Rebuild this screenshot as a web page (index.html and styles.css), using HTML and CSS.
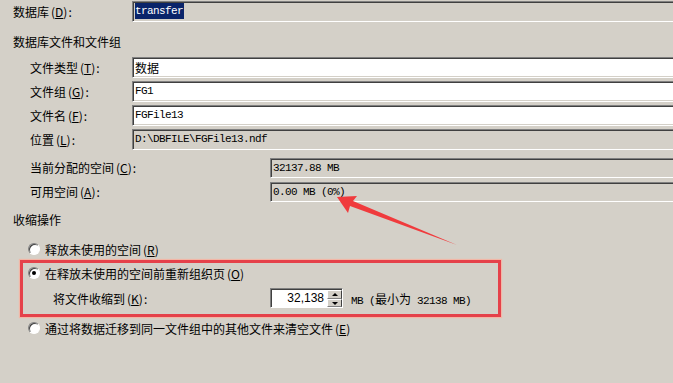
FILE: index.html
```html
<!DOCTYPE html>
<html>
  <head>
    <title>收缩文件</title>
    <link rel="stylesheet" href="styles.css">
  </head>
  <body>
    <div class="dialog">
      <div class="row top-row">
        <div class="label">数据库<span class="key">(<u>D</u>)</span>:</div>
        <div class="box gray"><span class="selected">transfer</span></div>
      </div>

      <div class="heading files-heading">数据库文件和文件组</div>

      <div class="group">
        <div class="row">
          <div class="label">文件类型<span class="key">(<u>T</u>)</span>:</div>
          <div class="box"><span class="cjk">数据</span></div>
        </div>
        <div class="row">
          <div class="label">文件组<span class="key">(<u>G</u>)</span>:</div>
          <div class="box">FG1</div>
        </div>
        <div class="row">
          <div class="label">文件名<span class="key">(<u>F</u>)</span>:</div>
          <div class="box">FGFile13</div>
        </div>
        <div class="row">
          <div class="label">位置<span class="key">(<u>L</u>)</span>:</div>
          <div class="box gray">D:\DBFILE\FGFile13.ndf</div>
        </div>

        <div class="row space-row first-space">
          <div class="label wide">当前分配的空间<span class="key">(<u>C</u>)</span>:</div>
          <div class="box gray">32137.88 MB</div>
        </div>
        <div class="row space-row">
          <div class="label wide">可用空间<span class="key">(<u>A</u>)</span>:</div>
          <div class="box gray">0.00 MB (0%)</div>
        </div>
      </div>

      <div class="heading shrink-heading">收缩操作</div>

      <div class="option first-option">
        <span class="radio"></span>
        <span>释放未使用的空间<span class="key">(<u>R</u>)</span></span>
      </div>

      <div class="highlight">
        <div class="option">
          <span class="radio checked"></span>
          <span>在释放未使用的空间前重新组织页<span class="key">(<u>O</u>)</span></span>
        </div>
        <div class="shrink-row">
          <div class="label shrink-label">将文件收缩到<span class="key">(<u>K</u>)</span>:</div>
          <div class="spinner">
            <div class="spin-value">32,138</div>
            <div class="spin-buttons">
              <span class="spin-btn up"></span>
              <span class="spin-btn down"></span>
            </div>
          </div>
          <div class="unit">MB (<span class="cjk">最小为</span> 32138 MB)</div>
        </div>
      </div>

      <div class="option last-option">
        <span class="radio"></span>
        <span>通过将数据迁移到同一文件组中的其他文件来清空文件<span class="key">(<u>E</u>)</span></span>
      </div>
    </div>

    <!-- red annotation arrow drawn over the dialog -->
    <svg class="arrow" width="673" height="383" viewBox="0 0 673 383">
      <polygon points="337,197 357,196 353,201 457,245 350,206 348,213" fill="#f03b3d"/>
    </svg>
  </body>
</html>
```

FILE: styles.css
```css
body {
  margin: 0;
  width: 673px;
  height: 383px;
  overflow: hidden;
  position: relative;
  background-color: #d4d0c8;
  font-family: "Noto Sans CJK SC", "Liberation Sans", sans-serif;
  font-size: 12px;
  color: #000;
}

u {
  text-decoration: underline;
  text-underline-offset: 1px;
}

.key {
  margin-left: 2px;
  margin-right: 1px;
}

.dialog {
  display: flex;
  flex-direction: column;
  padding-top: 1px;
}

.row {
  display: flex;
  align-items: center;
  height: 21px;
}

.top-row {
  padding-left: 13px;
}

.label {
  width: 102px;
  flex-shrink: 0;
  line-height: 21px;
}

.top-row .label {
  width: 119px;
}

.label.wide {
  width: 240px;
}

.box {
  flex: 1;
  height: 21px;
  box-sizing: border-box;
  margin-right: -4px;
  padding-left: 2px;
  background-color: #fff;
  border: 1px solid;
  border-color: #808080 #fff #fff #808080;
  box-shadow: inset 1px 1px #404040, inset -1px -1px #d4d0c8;
  font-family: "Liberation Mono", monospace;
  font-size: 11px;
  letter-spacing: -0.6px;
  line-height: 19px;
  white-space: nowrap;
}

.box.gray {
  background-color: #d4d0c8;
}

.cjk {
  font-family: "Noto Sans CJK SC", sans-serif;
  font-size: 12px;
  letter-spacing: 0;
}

.selected {
  background-color: #0a246a;
  color: #fff;
  padding: 2px 1px 2px 0;
}

.heading {
  height: 20px;
  line-height: 20px;
  padding-left: 13px;
}

.files-heading {
  margin-top: 10px;
}

.group {
  display: flex;
  flex-direction: column;
  gap: 3px;
  margin-top: 5px;
  padding-left: 30px;
}

.space-row .box {
  height: 20px;
}

.first-space {
  margin-top: 4px;
}

.shrink-heading {
  margin-top: 8px;
}

.option {
  display: flex;
  align-items: center;
  gap: 5px;
  height: 20px;
}

.first-option {
  margin-top: 9px;
  padding-left: 28px;
}

.last-option {
  margin-top: 1px;
  padding-left: 28px;
}

.radio {
  width: 12px;
  height: 12px;
  box-sizing: border-box;
  border-radius: 50%;
  background-color: #fff;
  border: 1px solid;
  border-color: #808080 #fff #fff #808080;
  box-shadow: inset 1px 1px #404040;
  position: relative;
}

.radio.checked::after {
  content: "";
  position: absolute;
  left: 3px;
  top: 3px;
  width: 4px;
  height: 4px;
  border-radius: 50%;
  background-color: #000;
}

.highlight {
  width: 481px;
  box-sizing: border-box;
  margin-top: 1px;
  margin-left: 20px;
  padding: 1px 0 6px 5px;
  border: 3px solid #e5414a;
  box-shadow: 0 0 1px 1px #f2b6a6;
}

.highlight .option {
  height: 18px;
}

.shrink-row {
  display: flex;
  align-items: center;
  height: 20px;
  margin-top: 6px;
  padding-left: 25px;
}

.shrink-label {
  width: 217px;
}

.spinner {
  display: flex;
  width: 73px;
  height: 20px;
  box-sizing: border-box;
  border: 1px solid;
  border-color: #808080 #fff #fff #808080;
  box-shadow: inset 1px 1px #404040;
  background-color: #fff;
}

.spin-value {
  flex: 1;
  text-align: right;
  padding-right: 3px;
  line-height: 18px;
  font-family: "Liberation Sans", sans-serif;
  font-size: 12px;
}

.spin-buttons {
  display: flex;
  flex-direction: column;
  width: 15px;
  margin: 1px 0 0 0;
}

.spin-btn {
  flex: 1;
  position: relative;
  background-color: #d4d0c8;
  border-top: 1px solid #fff;
  border-left: 1px solid #fff;
  border-bottom: 1px solid #808080;
  border-right: 1px solid #404040;
}

.spin-btn::after {
  content: "";
  position: absolute;
  left: 4px;
  top: 2px;
  border-left: 3px solid transparent;
  border-right: 3px solid transparent;
}

.spin-btn.up::after {
  border-bottom: 3px solid #000;
}

.spin-btn.down::after {
  top: 2px;
  border-top: 3px solid #000;
}

.unit {
  margin-left: 8px;
  font-family: "Liberation Mono", monospace;
  font-size: 11px;
  letter-spacing: -0.6px;
  white-space: nowrap;
}

.arrow {
  position: absolute;
  left: 0;
  top: 0;
  pointer-events: none;
}
```
